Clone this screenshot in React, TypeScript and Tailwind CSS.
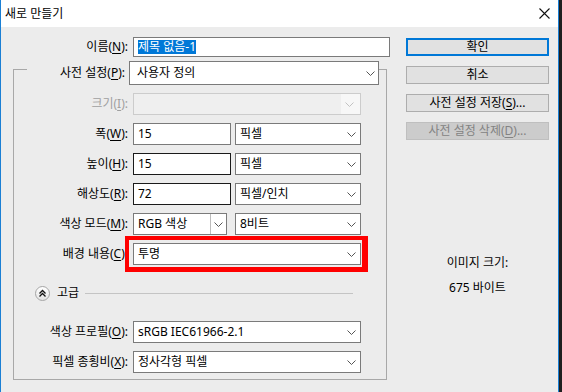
import type { ReactNode } from 'react';
import clsx from 'clsx';

const FONT = "font-['Noto_Sans','Noto_Sans_CJK_KR',sans-serif]";

/** Thin Windows-10 style combobox chevron. */
function Chevron({ color = '#555555' }: { color?: string }) {
  return (
    <svg width="9" height="5" viewBox="0 0 9 5" fill="none" aria-hidden="true">
      <path d="M0.5 0.5L4.5 4.5L8.5 0.5" stroke={color} strokeWidth="1" />
    </svg>
  );
}

/** Label like "폭(W):" with the access key underlined. */
function Label({
  text,
  hotkey,
  width,
  disabled,
}: {
  text: string;
  hotkey: string;
  width: string;
  disabled?: boolean;
}) {
  return (
    <div
      className={clsx(
        'flex shrink-0 justify-end whitespace-nowrap',
        width,
        disabled ? 'text-[#a0a0a0]' : 'text-black',
      )}
    >
      {text}(<span className="underline underline-offset-2">{hotkey}</span>):
    </div>
  );
}

function Select({ value, className }: { value: string; className: string }) {
  return (
    <div
      className={clsx(
        'flex h-[22px] items-center justify-between border border-[#7a7a7a] bg-white pl-[4px] pr-[4px]',
        className,
      )}
    >
      <span className="whitespace-nowrap">{value}</span>
      <Chevron />
    </div>
  );
}

function Input({ value, dark }: { value: string; dark?: boolean }) {
  return (
    <div
      className={clsx(
        'flex h-[22px] w-[98px] items-center border bg-white pl-[4px]',
        dark ? 'border-[#1a1a1a]' : 'border-[#7a7a7a]',
      )}
    >
      {value}
    </div>
  );
}

function Row({ children, className }: { children: ReactNode; className?: string }) {
  return <div className={clsx('flex h-[22px] items-center', className)}>{children}</div>;
}

function Button({
  children,
  primary,
  disabled,
}: {
  children: ReactNode;
  primary?: boolean;
  disabled?: boolean;
}) {
  return (
    <div
      className={clsx(
        'flex h-[18px] w-[143px] items-center justify-center whitespace-nowrap',
        primary && 'border-2 border-[#0078d7] bg-[#e1e1e1] text-black',
        !primary && !disabled && 'border border-[#adadad] bg-[#e1e1e1] text-black',
        disabled && 'border border-[#bfbfbf] bg-[#cccccc] text-[#838383]',
      )}
    >
      {children}
    </div>
  );
}

export default function App() {
  return (
    <div className={clsx('h-[392px] w-[562px] overflow-hidden bg-[#1f1f1f] text-[12px] leading-none', FONT)}>
      <div className="flex h-full w-[559px] flex-col border-x border-[#1a7fd4] bg-[#ececec]">
        {/* Title bar */}
        <div className="flex h-[27px] shrink-0 items-center justify-between bg-white pl-[4px] pr-[8px]">
          <span className="text-black">새로 만들기</span>
          <svg width="11" height="11" viewBox="0 0 11 11" aria-hidden="true">
            <path d="M0.5 0.5L10.5 10.5M10.5 0.5L0.5 10.5" stroke="#111" strokeWidth="1.1" />
          </svg>
        </div>

        <div className="flex pt-[10px]">
          {/* Left column */}
          <div className="flex flex-col">
            <div className="flex h-[20px] items-center">
              <Label text="이름" hotkey="N" width="w-[127px]" />
              <div className="ml-[5px] flex h-[20px] w-[257px] items-center border border-[#7a7a7a] bg-white pl-[4px]">
                <span className="bg-[#0078d7] py-[1px] text-white">제목 없음-1</span>
              </div>
            </div>

            {/* Group box */}
            <div className="ml-[12px] mt-[12px] flex h-[311px] w-[374px] flex-col border border-[#a8a8a8]">
              <div className="-mt-[9px] flex h-[24px] items-stretch">
                <div className="ml-[13px] flex w-[102px] items-center justify-end bg-[#ececec] pr-[4px]">
                  <span className="whitespace-nowrap">
                    사전 설정(<span className="underline underline-offset-2">P</span>):
                  </span>
                </div>
                <div className="flex w-[250px] items-center justify-between border border-[#7a7a7a] bg-white pl-[7px] pr-[3px]">
                  <span>사용자 정의</span>
                  <Chevron />
                </div>
              </div>

              <Row className="mt-[8px]">
                <Label text="크기" hotkey="I" width="w-[114px]" disabled />
                <div className="ml-[5px] flex h-[22px] w-[228px] border border-[#cccccc] bg-[#efefef]">
                  <div className="flex-1" />
                  <div className="flex w-[19px] items-center justify-center bg-[#f7f7f7] pr-[2px]">
                    <Chevron color="#c2c2c2" />
                  </div>
                </div>
              </Row>

              <Row className="mt-[8px]">
                <Label text="폭" hotkey="W" width="w-[114px]" />
                <div className="ml-[5px] flex gap-[4px]">
                  <Input value="15" />
                  <Select value="픽셀" className="w-[126px]" />
                </div>
              </Row>

              <Row className="mt-[8px]">
                <Label text="높이" hotkey="H" width="w-[114px]" />
                <div className="ml-[5px] flex gap-[4px]">
                  <Input value="15" dark />
                  <Select value="픽셀" className="w-[126px]" />
                </div>
              </Row>

              <Row className="mt-[8px]">
                <Label text="해상도" hotkey="R" width="w-[114px]" />
                <div className="ml-[5px] flex gap-[4px]">
                  <Input value="72" dark />
                  <Select value="픽셀/인치" className="w-[126px]" />
                </div>
              </Row>

              <Row className="mt-[8px]">
                <Label text="색상 모드" hotkey="M" width="w-[114px]" />
                <div className="ml-[5px] flex gap-[8px]">
                  <div className="flex h-[22px] w-[94px] border border-[#7a7a7a] bg-white">
                    <div className="flex flex-1 items-center pl-[4px]">RGB 색상</div>
                    <div className="flex w-[16px] items-center justify-center border-l border-[#bdbdbd]">
                      <Chevron />
                    </div>
                  </div>
                  <Select value="8비트" className="w-[126px]" />
                </div>
              </Row>

              <Row className="mt-[8px]">
                <Label text="배경 내용" hotkey="C" width="w-[114px]" />
                <div className="relative ml-[5px]">
                  <Select value="투명" className="w-[228px]" />
                  {/* Red highlight drawn over the screenshot */}
                  <div className="pointer-events-none absolute -bottom-[7px] -left-[8px] -right-[7px] -top-[7px] border-b-[5px] border-l-4 border-r-[6px] border-t-4 border-[#ff0000]" />
                </div>
              </Row>

              <div className="ml-[21px] mt-[20px] flex h-[16px] items-center">
                <div className="flex h-[15px] w-[15px] items-center justify-center rounded-full border border-[#a6a6a6] bg-gradient-to-b from-white to-[#e4e4e4]">
                  <svg width="9" height="9" viewBox="0 0 9 9" fill="none" aria-hidden="true">
                    <path d="M1.5 4.5L4.5 1.5L7.5 4.5M1.5 7.5L4.5 4.5L7.5 7.5" stroke="#111" strokeWidth="1.3" />
                  </svg>
                </div>
                <span className="ml-[7px]">고급</span>
                <div className="ml-[6px] h-px w-[268px] bg-[#c4c4c4]" />
              </div>

              <Row className="mt-[20px]">
                <Label text="색상 프로필" hotkey="O" width="w-[114px]" />
                <Select value="sRGB IEC61966-2.1" className="ml-[5px] w-[228px]" />
              </Row>

              <Row className="mt-[8px]">
                <Label text="픽셀 종횡비" hotkey="X" width="w-[114px]" />
                <Select value="정사각형 픽셀" className="ml-[5px] w-[228px]" />
              </Row>
            </div>
          </div>

          {/* Right column */}
          <div className="ml-[16px] flex flex-col pt-[1px]">
            <div className="flex flex-col gap-[10px]">
              <Button primary>확인</Button>
              <Button>취소</Button>
              <Button>
                사전 설정 저장(<span className="underline underline-offset-2">S</span>)...
              </Button>
              <Button disabled>
                사전 설정 삭제(<span className="underline underline-offset-2">D</span>)...
              </Button>
            </div>
            <div className="mt-[116px] text-center leading-[14px]">이미지 크기:</div>
            <div className="mt-[11px] text-center leading-[14px]">675 바이트</div>
          </div>
        </div>
      </div>
    </div>
  );
}
